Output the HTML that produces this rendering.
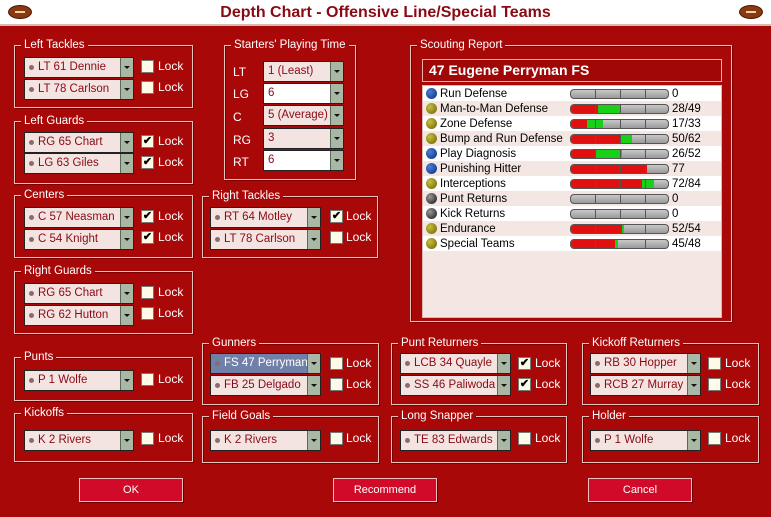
<!DOCTYPE html>
<html><head><meta charset="utf-8"><style>
*{margin:0;padding:0;box-sizing:border-box}
body{width:771px;height:517px;overflow:hidden;position:relative;background:#a80808;font-family:"Liberation Sans",sans-serif;font-size:12px;color:#fff}
.top{position:absolute;left:0;top:0;width:771px;height:26px;background:#fff;border-bottom:2px solid #d8b8b0}
.title{position:absolute;left:0;width:771px;top:4px;text-align:center;font-weight:bold;font-size:16px;color:#8a0a14}
.ball{position:absolute;top:5px;width:24px;height:14px;border-radius:50%;background:#8a3a10;border:1px solid #4a1a00}
.ball:after{content:"";position:absolute;left:6px;top:5px;width:10px;height:2px;background:#f0d0b0}
.g{position:absolute;border:1px solid #e6c4bc;box-shadow:inset 1px 1px 0 #7a0000,1px 1px 0 #7a0000}
.g>span{position:absolute;top:-8px;left:6px;background:#a80808;padding:0 3px;font-size:11.5px;line-height:14px;color:#fff}
.cb{position:absolute;height:21px;background:#f3e4e2;border:1px solid #222;color:#8a0a14;font-size:11.5px;line-height:19px;padding-left:13px;white-space:nowrap;overflow:hidden}
.cb.w{background:#fff}
.cb:before{content:"";position:absolute;left:4px;top:7px;width:5px;height:5px;border-radius:50%;background:#8a6a6a}
.cb.n{padding-left:4px}.cb.n:before{display:none}
.cb.sel{background:#7080a8;color:#fff}
.cb i{position:absolute;right:0;top:0;width:13px;height:19px;background:#a8b8a4;border-left:1px solid #5a6a5a}
.cb i:after{content:"";position:absolute;left:3px;top:8px;border:3px solid transparent;border-top:3px solid #111;border-bottom:0}
.ck{position:absolute;width:13px;height:13px;background:#fdfbe8;border:1px solid #777;color:#000;font-size:11px;line-height:11px;text-align:center;font-weight:bold}
.lk{position:absolute;font-size:12px;color:#fff;margin-top:-1px}
.lab{position:absolute;font-size:12px}
.btn{position:absolute;height:24px;width:104px;background:#d00a28;border:1px solid #f0c0c0;box-shadow:1px 1px 0 #600;text-align:center;line-height:22px;color:#fff;font-size:11px}
.rep{position:absolute;left:422px;top:59px;width:300px;height:23px;border:1px solid #e8b0a8;background:#a00808;color:#fff;font-weight:bold;font-size:14px;line-height:21px;padding-left:6px}
.list{position:absolute;left:422px;top:85px;width:300px;height:233px;background:#f3e6e3;border:1px solid #d8b8b0}
.row{position:absolute;left:0;width:298px;height:15px;color:#000;font-size:11.5px;line-height:15px}
.row.a{background:#fff}
.row b{position:absolute;left:3px;top:2px;width:11px;height:11px;border-radius:50%}
.row .t{position:absolute;left:17px;top:1px}
.row .v{position:absolute;left:249px;top:1px}
.bar{position:absolute;left:147px;top:3px;width:99px;height:10px;border-radius:4px;background:linear-gradient(#c8c8c8,#9a9a9a);border:1px solid #555;overflow:hidden}
.bar .r{position:absolute;left:0;top:0;height:100%;background:#e01010}
.bar .gr{position:absolute;top:0;height:100%;background:#18d018}
.bar .d{position:absolute;top:0;height:100%;width:1px;background:#555}
</style></head><body>
<div class="top"></div>
<div class="ball" style="left:8px"></div><div class="ball" style="left:739px"></div>
<div class="title">Depth Chart - Offensive Line/Special Teams</div>

<div class="g" style="left:14px;top:45px;width:179px;height:63px"><span>Left Tackles</span></div>
<div class="cb" style="left:24px;top:57px;width:110px">LT 61 Dennie<i></i></div>
<div class="cb" style="left:24px;top:79px;width:110px">LT 78 Carlson<i></i></div>
<div class="ck" style="left:141px;top:60px"></div><div class="lk" style="left:158px;top:60px">Lock</div>
<div class="ck" style="left:141px;top:81px"></div><div class="lk" style="left:158px;top:81px">Lock</div>

<div class="g" style="left:14px;top:121px;width:179px;height:63px"><span>Left Guards</span></div>
<div class="cb" style="left:24px;top:132px;width:110px">RG 65 Chart<i></i></div>
<div class="cb" style="left:24px;top:153px;width:110px">LG 63 Giles<i></i></div>
<div class="ck" style="left:141px;top:135px">✔</div><div class="lk" style="left:158px;top:135px">Lock</div>
<div class="ck" style="left:141px;top:156px">✔</div><div class="lk" style="left:158px;top:156px">Lock</div>

<div class="g" style="left:14px;top:195px;width:179px;height:63px"><span>Centers</span></div>
<div class="cb" style="left:24px;top:207px;width:110px">C 57 Neasman<i></i></div>
<div class="cb" style="left:24px;top:229px;width:110px">C 54 Knight<i></i></div>
<div class="ck" style="left:141px;top:210px">✔</div><div class="lk" style="left:158px;top:210px">Lock</div>
<div class="ck" style="left:141px;top:231px">✔</div><div class="lk" style="left:158px;top:231px">Lock</div>

<div class="g" style="left:14px;top:271px;width:179px;height:63px"><span>Right Guards</span></div>
<div class="cb" style="left:24px;top:283px;width:110px">RG 65 Chart<i></i></div>
<div class="cb" style="left:24px;top:305px;width:110px">RG 62 Hutton<i></i></div>
<div class="ck" style="left:141px;top:286px"></div><div class="lk" style="left:158px;top:286px">Lock</div>
<div class="ck" style="left:141px;top:307px"></div><div class="lk" style="left:158px;top:307px">Lock</div>

<div class="g" style="left:14px;top:357px;width:179px;height:44px"><span>Punts</span></div>
<div class="cb" style="left:24px;top:370px;width:110px">P 1 Wolfe<i></i></div>
<div class="ck" style="left:141px;top:373px"></div><div class="lk" style="left:158px;top:373px">Lock</div>

<div class="g" style="left:14px;top:413px;width:179px;height:49px"><span>Kickoffs</span></div>
<div class="cb" style="left:24px;top:430px;width:110px">K 2 Rivers<i></i></div>
<div class="ck" style="left:141px;top:432px"></div><div class="lk" style="left:158px;top:432px">Lock</div>

<div class="g" style="left:224px;top:45px;width:132px;height:135px"><span>Starters' Playing Time</span></div>
<div class="lab" style="left:233px;top:65px">LT</div>
<div class="lab" style="left:233px;top:87px">LG</div>
<div class="lab" style="left:233px;top:110px">C</div>
<div class="lab" style="left:233px;top:133px">RG</div>
<div class="lab" style="left:233px;top:155px">RT</div>
<div class="cb n" style="left:263px;top:61px;width:81px">1 (Least)<i></i></div>
<div class="cb n w" style="left:263px;top:83px;width:81px">6<i></i></div>
<div class="cb n" style="left:263px;top:105px;width:81px">5 (Average)<i></i></div>
<div class="cb n" style="left:263px;top:128px;width:81px">3<i></i></div>
<div class="cb n w" style="left:263px;top:150px;width:81px">6<i></i></div>

<div class="g" style="left:202px;top:196px;width:176px;height:62px"><span>Right Tackles</span></div>
<div class="cb" style="left:210px;top:207px;width:111px">RT 64 Motley<i></i></div>
<div class="cb" style="left:210px;top:229px;width:111px">LT 78 Carlson<i></i></div>
<div class="ck" style="left:330px;top:210px">✔</div><div class="lk" style="left:346px;top:210px">Lock</div>
<div class="ck" style="left:330px;top:231px"></div><div class="lk" style="left:346px;top:231px">Lock</div>

<div class="g" style="left:410px;top:45px;width:322px;height:277px"><span>Scouting Report</span></div>
<div class="rep">47 Eugene Perryman FS</div>
<div class="list">
<div class="row a" style="top:0"><b style="background:radial-gradient(circle at 35% 35%,#4a80d0,#0a2a80)"></b><span class="t">Run Defense</span><div class="bar"><div class="d" style="left:24px"></div><div class="d" style="left:49px"></div><div class="d" style="left:74px"></div></div><span class="v">0</span></div>
<div class="row" style="top:15px"><b style="background:radial-gradient(circle at 35% 35%,#c8c040,#6a6000)"></b><span class="t">Man-to-Man Defense</span><div class="bar"><div class="r" style="width:27px"></div><div class="gr" style="left:27px;width:22px"></div><div class="d" style="left:24px"></div><div class="d" style="left:49px"></div><div class="d" style="left:74px"></div></div><span class="v">28/49</span></div>
<div class="row a" style="top:30px"><b style="background:radial-gradient(circle at 35% 35%,#c8c040,#6a6000)"></b><span class="t">Zone Defense</span><div class="bar"><div class="r" style="width:16px"></div><div class="gr" style="left:16px;width:16px"></div><div class="d" style="left:24px"></div><div class="d" style="left:49px"></div><div class="d" style="left:74px"></div></div><span class="v">17/33</span></div>
<div class="row" style="top:45px"><b style="background:radial-gradient(circle at 35% 35%,#c8c040,#6a6000)"></b><span class="t">Bump and Run Defense</span><div class="bar"><div class="r" style="width:49px"></div><div class="gr" style="left:49px;width:12px"></div><div class="d" style="left:24px"></div><div class="d" style="left:49px"></div><div class="d" style="left:74px"></div></div><span class="v">50/62</span></div>
<div class="row a" style="top:60px"><b style="background:radial-gradient(circle at 35% 35%,#4a80d0,#0a2a80)"></b><span class="t">Play Diagnosis</span><div class="bar"><div class="r" style="width:25px"></div><div class="gr" style="left:25px;width:26px"></div><div class="d" style="left:24px"></div><div class="d" style="left:49px"></div><div class="d" style="left:74px"></div></div><span class="v">26/52</span></div>
<div class="row" style="top:75px"><b style="background:radial-gradient(circle at 35% 35%,#4a80d0,#0a2a80)"></b><span class="t">Punishing Hitter</span><div class="bar"><div class="r" style="width:76px"></div><div class="d" style="left:24px"></div><div class="d" style="left:49px"></div><div class="d" style="left:74px"></div></div><span class="v">77</span></div>
<div class="row a" style="top:90px"><b style="background:radial-gradient(circle at 35% 35%,#c8c040,#6a6000)"></b><span class="t">Interceptions</span><div class="bar"><div class="r" style="width:71px"></div><div class="gr" style="left:71px;width:12px"></div><div class="d" style="left:24px"></div><div class="d" style="left:49px"></div><div class="d" style="left:74px"></div></div><span class="v">72/84</span></div>
<div class="row" style="top:105px"><b style="background:radial-gradient(circle at 35% 35%,#999,#111)"></b><span class="t">Punt Returns</span><div class="bar"><div class="d" style="left:24px"></div><div class="d" style="left:49px"></div><div class="d" style="left:74px"></div></div><span class="v">0</span></div>
<div class="row a" style="top:120px"><b style="background:radial-gradient(circle at 35% 35%,#999,#111)"></b><span class="t">Kick Returns</span><div class="bar"><div class="d" style="left:24px"></div><div class="d" style="left:49px"></div><div class="d" style="left:74px"></div></div><span class="v">0</span></div>
<div class="row" style="top:135px"><b style="background:radial-gradient(circle at 35% 35%,#c8c040,#6a6000)"></b><span class="t">Endurance</span><div class="bar"><div class="r" style="width:51px"></div><div class="gr" style="left:51px;width:2px"></div><div class="d" style="left:24px"></div><div class="d" style="left:74px"></div></div><span class="v">52/54</span></div>
<div class="row a" style="top:150px"><b style="background:radial-gradient(circle at 35% 35%,#c8c040,#6a6000)"></b><span class="t">Special Teams</span><div class="bar"><div class="r" style="width:44px"></div><div class="gr" style="left:44px;width:3px"></div><div class="d" style="left:24px"></div><div class="d" style="left:74px"></div></div><span class="v">45/48</span></div>
</div>

<div class="g" style="left:202px;top:343px;width:177px;height:62px"><span>Gunners</span></div>
<div class="cb sel" style="left:210px;top:353px;width:111px">FS 47 Perryman<i></i></div>
<div class="cb" style="left:210px;top:375px;width:111px">FB 25 Delgado<i></i></div>
<div class="ck" style="left:330px;top:357px"></div><div class="lk" style="left:346px;top:357px">Lock</div>
<div class="ck" style="left:330px;top:378px"></div><div class="lk" style="left:346px;top:378px">Lock</div>

<div class="g" style="left:391px;top:343px;width:176px;height:62px"><span>Punt Returners</span></div>
<div class="cb" style="left:400px;top:353px;width:111px">LCB 34 Quayle<i></i></div>
<div class="cb" style="left:400px;top:375px;width:111px">SS 46 Paliwoda<i></i></div>
<div class="ck" style="left:518px;top:357px">✔</div><div class="lk" style="left:535px;top:357px">Lock</div>
<div class="ck" style="left:518px;top:378px">✔</div><div class="lk" style="left:535px;top:378px">Lock</div>

<div class="g" style="left:582px;top:343px;width:177px;height:62px"><span>Kickoff Returners</span></div>
<div class="cb" style="left:590px;top:353px;width:111px">RB 30 Hopper<i></i></div>
<div class="cb" style="left:590px;top:375px;width:111px">RCB 27 Murray<i></i></div>
<div class="ck" style="left:708px;top:357px"></div><div class="lk" style="left:725px;top:357px">Lock</div>
<div class="ck" style="left:708px;top:378px"></div><div class="lk" style="left:725px;top:378px">Lock</div>

<div class="g" style="left:202px;top:416px;width:177px;height:47px"><span>Field Goals</span></div>
<div class="cb" style="left:210px;top:430px;width:111px">K 2 Rivers<i></i></div>
<div class="ck" style="left:330px;top:432px"></div><div class="lk" style="left:346px;top:432px">Lock</div>

<div class="g" style="left:391px;top:416px;width:176px;height:47px"><span>Long Snapper</span></div>
<div class="cb" style="left:400px;top:430px;width:111px">TE 83 Edwards<i></i></div>
<div class="ck" style="left:518px;top:432px"></div><div class="lk" style="left:535px;top:432px">Lock</div>

<div class="g" style="left:582px;top:416px;width:177px;height:47px"><span>Holder</span></div>
<div class="cb" style="left:590px;top:430px;width:111px">P 1 Wolfe<i></i></div>
<div class="ck" style="left:708px;top:432px"></div><div class="lk" style="left:725px;top:432px">Lock</div>

<div class="btn" style="left:79px;top:478px">OK</div>
<div class="btn" style="left:333px;top:478px">Recommend</div>
<div class="btn" style="left:588px;top:478px">Cancel</div>
</body></html>
